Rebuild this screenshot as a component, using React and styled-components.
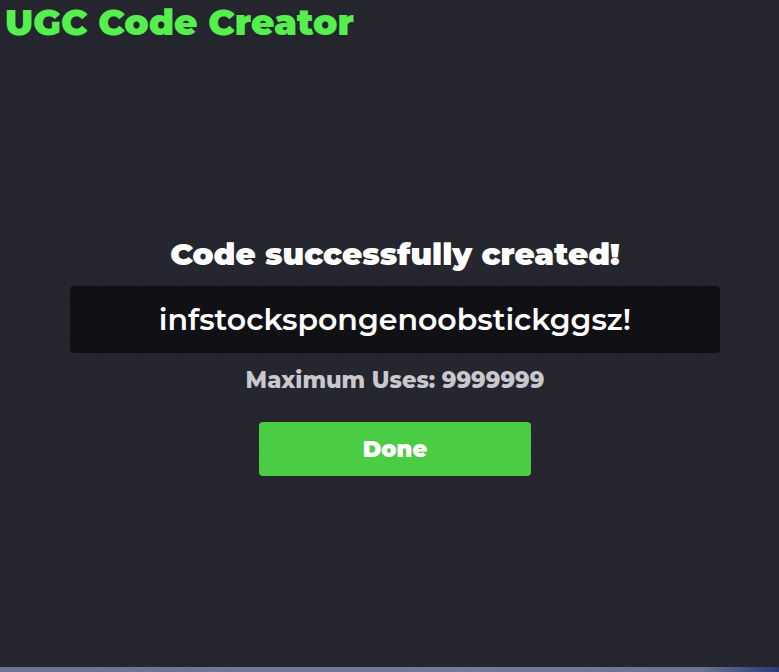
import React from 'react';
import styled, { createGlobalStyle } from 'styled-components';

const GlobalStyle = createGlobalStyle`
  html, body {
    margin: 0;
    height: 100%;
  }

  body {
    background-color: #262630;
    background-image:
      linear-gradient(45deg, rgba(0, 0, 0, 0.035) 25%, transparent 25%, transparent 75%, rgba(0, 0, 0, 0.035) 75%),
      linear-gradient(-45deg, rgba(0, 0, 0, 0.035) 25%, transparent 25%, transparent 75%, rgba(0, 0, 0, 0.035) 75%);
    background-size: 20px 20px;
    font-family: Montserrat, Inter, "Noto Sans", sans-serif;
  }
`;

const Page = styled.div`
  display: flex;
  flex-direction: column;
  height: 672px;
  overflow: hidden;
`;

const Title = styled.h1`
  color: #55f04e;
  font-size: 36px;
  font-weight: 900;
  line-height: 40px;
  margin: 0;
  padding: 2px 0 0 5px;
`;

const Main = styled.main`
  align-items: center;
  display: flex;
  flex: 1;
  flex-direction: column;
  padding: 193px 0 0 11px;
`;

const Heading = styled.h2`
  color: #fff;
  font-size: 31px;
  font-weight: 900;
  line-height: 38px;
  margin: 0 0 13px;
`;

const CodeBox = styled.div`
  align-items: center;
  background: #111115;
  border-radius: 4px;
  color: #fff;
  display: flex;
  font-size: 30px;
  font-weight: 600;
  height: 67px;
  justify-content: center;
  width: 650px;
`;

const Uses = styled.p`
  color: #c9c9cd;
  font-size: 22.6px;
  font-weight: 800;
  line-height: 28px;
  margin: 13px 0 0;
`;

const DoneButton = styled.button`
  background: #4bcc45;
  border: none;
  border-radius: 4px;
  color: #fff;
  cursor: pointer;
  font-family: inherit;
  font-size: 22.5px;
  font-weight: 900;
  height: 54px;
  margin-top: 28px;
  width: 272px;
`;

const BottomStrip = styled.div`
  background: linear-gradient(90deg, #6a7591 0%, #707b95 60%, #6a7591 90%, #2a3a78 100%);
  height: 5px;
`;

export default function App() {
  return (
    <>
      <GlobalStyle />
      <Page>
        <Title>UGC Code Creator</Title>
        <Main>
          <Heading>Code successfully created!</Heading>
          <CodeBox>infstockspongenoobstickggsz!</CodeBox>
          <Uses>Maximum Uses: 9999999</Uses>
          <DoneButton>Done</DoneButton>
        </Main>
        <BottomStrip />
      </Page>
    </>
  );
}
